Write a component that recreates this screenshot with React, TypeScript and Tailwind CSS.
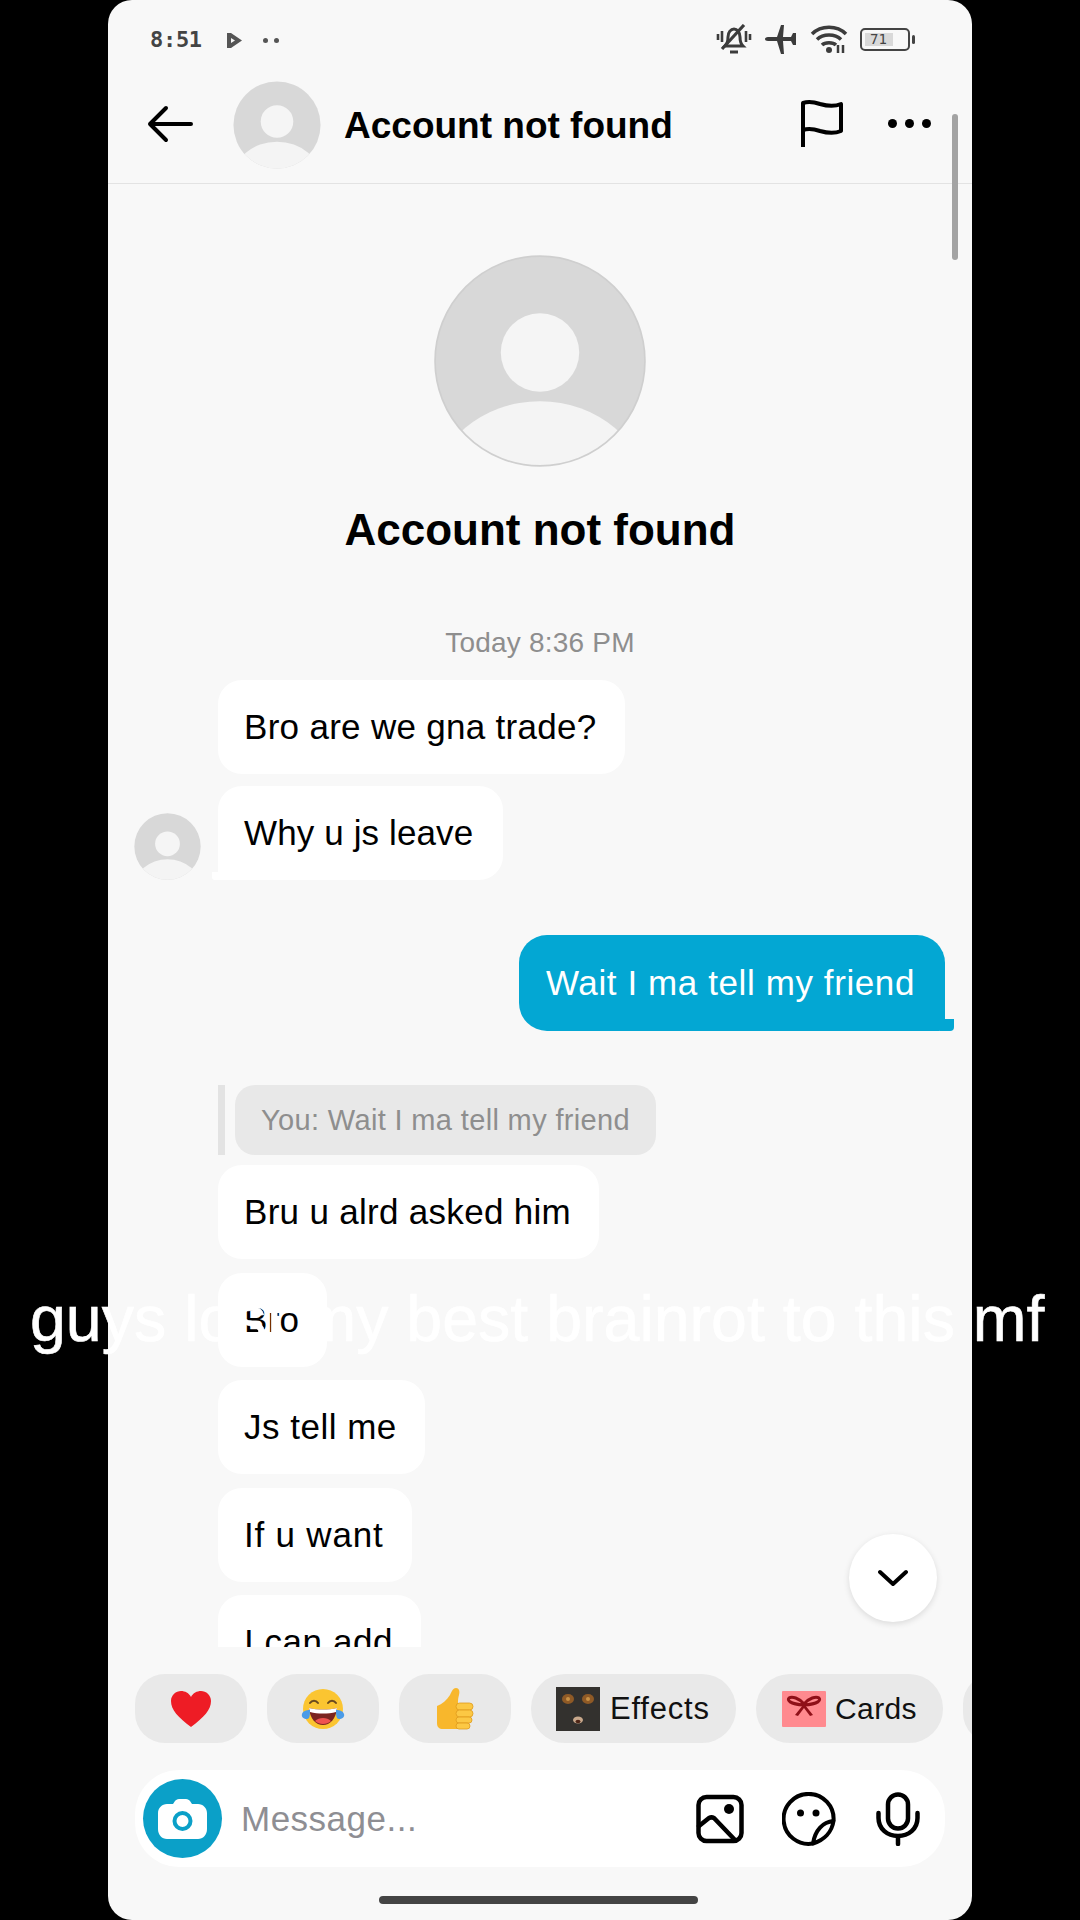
const sans = "font-['Liberation_Sans',Arial,sans-serif]";

const Avatar = ({ size, ring = false }: { size: number; ring?: boolean }) => (
  <svg width={size} height={size} viewBox="0 0 100 100" className="shrink-0">
    <defs>
      <clipPath id={`clip-${size}`}>
        <circle cx="50" cy="50" r="49.5" />
      </clipPath>
    </defs>
    <circle cx="50" cy="50" r="49.5" fill="#d8d8d8" />
    <g clipPath={`url(#clip-${size})`}>
      <circle cx="50" cy="46" r="18.5" fill="#f5f5f5" />
      <ellipse cx="50" cy="112" rx="50" ry="43" fill="#f4f4f4" />
    </g>
    {ring && <circle cx="50" cy="50" r="49.5" fill="none" stroke="#cfcfcf" strokeWidth="0.8" />}
  </svg>
);

const StatusBar = () => (
  <div className="flex h-[76px] items-start justify-between pl-[42px] pr-[57px] pt-[25px]">
    <div className="flex items-center">
      <span className="font-['DejaVu_Sans_Mono',monospace] text-[22px] font-bold leading-[30px] tracking-[-0.3px] text-[#444]">
        8:51
      </span>
      <svg width="15" height="15" viewBox="0 0 15 15" className="ml-[25px]">
        <path d="M0 0h4l11 7.500L4 15H0z M4 5v5l4-2.500z" fill="#555" fillRule="evenodd" />
      </svg>
      <span className="ml-[21px] flex gap-[6px]">
        <span className="size-[5px] rounded-full bg-[#555]" />
        <span className="size-[5px] rounded-full bg-[#555]" />
      </span>
    </div>
    <div className="-mt-[1px] flex items-center text-[#3c3c3c]">
      <svg width="36" height="30" viewBox="0 0 36 30" fill="none" stroke="currentColor" strokeWidth="3">
        <path d="M9 22c2-2 3-5 3-9 0-5 3-8 6-8s6 3 6 8c0 4 1 7 3 9z" />
        <path d="M6 25L28 1" strokeWidth="3.200" />
        <path d="M14 28h8" />
        <path d="M2 10v6M6 7v11M30 7v11M34 10v6" strokeWidth="2.600" />
      </svg>
      <svg width="33" height="30" viewBox="0 0 33 30" className="ml-[12px]" fill="currentColor">
        <path d="M1 15c0-1 1-2 3-2h9L17 1h3l-1 12h8l2-4h3v12h-3l-2-4h-8l1 13h-3l-4-13H4c-2 0-3-1-3-2z" />
      </svg>
      <svg width="38" height="30" viewBox="0 0 38 30" className="ml-[13px]" fill="none" stroke="currentColor" strokeWidth="3.500">
        <path d="M2 10c9-9 25-9 34 0M7 15.500c6-6 18-6 24 0M12 21c3-3 11-3 14 0" />
        <circle cx="19" cy="26" r="3" fill="currentColor" stroke="none" />
        <path d="M28 21v8M33 21v8" strokeWidth="2.500" />
      </svg>
      <div className="ml-[12px] flex h-[23px] w-[50px] items-center rounded-[5px] border-2 border-[#444] p-[3px]">
        <div className="flex h-full w-[28px] items-center bg-[#d9d9d9] pl-[3px] font-['DejaVu_Sans_Mono',monospace] text-[14px] leading-none text-[#444]">
          <span className="pl-[2px]">71</span>
        </div>
      </div>
      <span className="ml-[2px] h-[9px] w-[3px] rounded-sm bg-[#444]" />
    </div>
  </div>
);

const Header = () => (
  <div className="flex h-[108px] items-center border-b border-[#e3e3e3] pb-[8px] pl-[39px] pr-[41px]">
    <svg width="46" height="38" viewBox="0 0 46 38" fill="none" stroke="#000" strokeWidth="4" strokeLinecap="round" strokeLinejoin="round" className="-mt-[4px]">
      <path d="M44 19H3M19 3L3 19l16 16" />
    </svg>
    <div className="ml-[40px] -mt-[2px] h-[88px] w-[88px]">
      <Avatar size={88} />
    </div>
    <span className={`${sans} ml-[23px] text-[37px] font-bold leading-[44px] text-black`}>Account not found</span>
    <svg width="44" height="48" viewBox="0 0 44 48" fill="none" stroke="#000" strokeWidth="4" className="ml-auto -mt-[4px] translate-x-[2px]" strokeLinejoin="round">
      <path d="M3 47V3c6-2 11-1 17 1 7 2 14 3 21 0v27c-7 3-14 2-21 0-6-2-11-3-17-1" />
    </svg>
    <div className="ml-[46px] -mt-[5px] flex gap-[8px]">
      <span className="size-[9px] rounded-full bg-black" />
      <span className="size-[9px] rounded-full bg-black" />
      <span className="size-[9px] rounded-full bg-black" />
    </div>
  </div>
);

const Bubble = ({ text, className = "tracking-[0.3px] pr-[28px]" }: { text: string; className?: string }) => (
  <div
    className={`${sans} relative flex h-[94px] w-fit items-center rounded-[24px] bg-white pl-[26px] text-[35px] leading-[40px] text-black ${className}`}
  >
    {text}
  </div>
);

const Messages = () => (
  <div className="h-[1463px] overflow-hidden">
    <div className="mt-[71px] flex justify-center">
      <Avatar size={212} ring />
    </div>
    <div className={`${sans} mt-[38px] text-center text-[44px] font-bold leading-[50px] text-black`}>Account not found</div>
    <div className={`${sans} mt-[73px] text-center text-[28px] leading-[30px] tracking-[0.2px] text-[#8e8e8e]`}>Today 8:36 PM</div>

    <div className="mt-[22px] pl-[110px]">
      <Bubble text="Bro are we gna trade?" />
    </div>
    <div className="mt-[12px] flex items-end pl-[26px] pr-[18px]">
      <Avatar size={67} />
      <div className="relative ml-[17px]">
        <Bubble text="Why u js leave" className="rounded-bl-[4px] pr-[30px] tracking-[0.12px]" />
        <span className="absolute -left-[6px] bottom-0 h-[8px] w-[10px] rounded-bl-[3px] bg-white" />
      </div>
    </div>

    <div className="mt-[55px] flex justify-end pr-[27px]">
      <div className="relative">
        <div
          className={`${sans} flex h-[96px] items-center rounded-[28px] rounded-br-[6px] bg-[#03a7d3] pl-[27px] pr-[30px] text-[35px] leading-[40px] tracking-[0.6px] text-white`}
        >
          Wait I ma tell my friend
        </div>
        <span className="absolute -right-[9px] bottom-0 h-[12px] w-[14px] rounded-br-[4px] bg-[#03a7d3]" />
      </div>
    </div>

    <div className="mt-[54px] flex pl-[110px]">
      <span className="h-[70px] w-[7px] bg-[#e3e3e3]" />
      <div
        className={`${sans} ml-[10px] flex h-[70px] items-center rounded-[20px] bg-[#e8e8e8] pl-[26px] pr-[26px] text-[29px] leading-[34px] tracking-[0.35px] text-[#8e8e8e]`}
      >
        You: Wait I ma tell my friend
      </div>
    </div>

    <div className="mt-[10px] flex flex-col gap-[13.500px] pl-[110px]">
      <Bubble text="Bru u alrd asked him" />
      <Bubble text="Bro" />
      <Bubble text="Js tell me" className="pr-[28px] tracking-[0.5px]" />
      <Bubble text="If u want" className="pr-[28px] tracking-[0.8px]" />
      <Bubble text="I can add" className="pr-[28px] tracking-[0.55px]" />
    </div>
  </div>
);

const Heart = () => (
  <svg width="42" height="38" viewBox="0 0 42 38">
    <path d="M21 37C8 27 1 20 1 11 1 5 6 1 11 1c4 0 8 2 10 6 2-4 6-6 10-6 5 0 10 4 10 10 0 9-7 16-20 26z" fill="#ee1c25" />
  </svg>
);

const Laugh = () => (
  <svg width="44" height="44" viewBox="0 0 44 44">
    <circle cx="22" cy="22" r="20" fill="#fbc531" />
    <path d="M9 16c2-3 6-3 8 0M27 16c2-3 6-3 8 0" fill="none" stroke="#6b4a1e" strokeWidth="2" strokeLinecap="round" />
    <path d="M8 21c9 2 19 2 28 0-1 11-7 17-14 17S9 32 8 21z" fill="#7b2420" />
    <path d="M8 21c9 2 19 2 28 0l-1 4c-8 2-18 2-26 0z" fill="#fff" />
    <path d="M14 34c4-4 12-4 16 0-4 4-12 4-16 0z" fill="#ef5350" />
    <path d="M1 27c1-3 4-4 8-4 0 4 0 9-3 9s-6-2-5-5zM43 27c-1-3-4-4-8-4 0 4 0 9 3 9s6-2 5-5z" fill="#4a9be8" />
  </svg>
);

const Thumb = () => (
  <svg width="40" height="44" viewBox="0 0 40 44">
    <path d="M2 19c5-2 10-6 13-11 2-4 3-7 6-7s4 3 3 7c-1 3-1 7-1 8v26H8c-4 0-6-2-6-6z" fill="#f8b72c" />
    <rect x="21" y="16" width="17" height="7" rx="3.500" fill="#fcc844" stroke="#e09a1c" strokeWidth="0.8" />
    <rect x="21" y="23" width="17" height="7" rx="3.500" fill="#fcc844" stroke="#e09a1c" strokeWidth="0.8" />
    <rect x="21" y="30" width="16" height="6" rx="3" fill="#fcc844" stroke="#e09a1c" strokeWidth="0.8" />
    <rect x="21" y="36" width="14" height="6" rx="3" fill="#fcc844" stroke="#e09a1c" strokeWidth="0.8" />
  </svg>
);

const EmojiChip = ({ children }: { children: React.ReactNode }) => (
  <div className="flex h-[69px] w-[112px] shrink-0 items-center justify-center rounded-[30px] bg-[#e9e9e9]">
    {children}
  </div>
);

const QuickActions = () => (
  <div className="mt-[27px] flex h-[69px] gap-[20px] overflow-hidden pl-[27px]">
    <EmojiChip><Heart /></EmojiChip>
    <EmojiChip><Laugh /></EmojiChip>
    <EmojiChip><Thumb /></EmojiChip>
    <div className="flex h-[69px] w-[205px] shrink-0 items-center rounded-[34px] bg-[#e9e9e9] pl-[25px]">
      <svg width="44" height="44" viewBox="0 0 44 44">
        <rect width="44" height="44" fill="#33312e" />
        <ellipse cx="12" cy="12" rx="6" ry="5" fill="#8f5a26" />
        <ellipse cx="32" cy="12" rx="6" ry="5" fill="#8f5a26" />
        <circle cx="12" cy="12" r="2" fill="#c99246" />
        <circle cx="32" cy="12" r="2" fill="#c99246" />
        <ellipse cx="22" cy="33" rx="5" ry="3.500" fill="#c8a88c" />
        <ellipse cx="22" cy="34.500" rx="2.500" ry="1.800" fill="#4c2416" />
      </svg>
      <span className={`${sans} ml-[10px] text-[31px] leading-[36px] tracking-[0.8px] text-[#111]`}>Effects</span>
    </div>
    <div className="flex h-[69px] w-[187px] shrink-0 items-center rounded-[34px] bg-[#e9e9e9] pl-[26px]">
      <svg width="44" height="36" viewBox="0 0 44 36">
        <rect width="44" height="36" rx="1" fill="#ff8a8f" />
        <path d="M22 13C17 7 10 5 7 7c-2 2 0 6 15 7 15-1 17-5 15-7-3-2-10 0-15 6z" fill="none" stroke="#8f1018" strokeWidth="3" />
        <path d="M21 14l-8 10 3 1 6-8 6 8 3-1-8-10z" fill="#8f1018" />
      </svg>
      <span className={`${sans} ml-[9px] text-[30px] leading-[36px] tracking-[0.4px] text-[#111]`}>Cards</span>
    </div>
    <div className="h-[69px] w-[60px] shrink-0 rounded-l-[30px] bg-[#e9e9e9]" />
  </div>
);

const MessageBar = () => (
  <div className="mx-[27px] mt-[27px] flex h-[97px] items-center rounded-[44px] bg-white pl-[8px] pr-[25px]">
    <div className="flex size-[79px] items-center justify-center rounded-full bg-[#0ba0c8]">
      <svg width="49" height="40" viewBox="0 0 49 40">
        <path d="M9 5h6l2-3c1-1 2-2 4-2h7c2 0 3 1 4 2l2 3h6c5 0 9 4 9 9v16c0 6-4 10-9 10H9c-5 0-9-4-9-10V14c0-5 4-9 9-9z" fill="#fff" />
        <circle cx="24.500" cy="22" r="8" fill="none" stroke="#0ba0c8" strokeWidth="4" />
      </svg>
    </div>
    <span className={`${sans} ml-[19px] text-[35px] leading-[44px] tracking-[0.5px] text-[#8e8e93]`}>Message...</span>
    <svg width="48" height="50" viewBox="0 0 48 50" fill="none" stroke="#000" strokeWidth="4.500" strokeLinecap="round" strokeLinejoin="round" className="ml-auto">
      <rect x="2.500" y="3" width="43" height="44" rx="8" />
      <circle cx="33" cy="15" r="5" fill="#000" stroke="none" />
      <path d="M3 32l10-8c2-1 3-1 5 0l21 22" />
    </svg>
    <svg width="54" height="54" viewBox="0 0 54 54" fill="none" stroke="#000" strokeWidth="4" strokeLinejoin="round" className="ml-[38px]">
      <path d="M51.500 29A25 25 0 1 0 31 51.500" />
      <path d="M51.500 29C41 30 33 38 31 51.500C42 48 50 40 51.500 29z" />
      <circle cx="18.500" cy="21" r="3.500" fill="#000" stroke="none" />
      <circle cx="34" cy="21" r="3.500" fill="#000" stroke="none" />
    </svg>
    <svg width="44" height="54" viewBox="0 0 44 54" fill="none" stroke="#000" strokeWidth="4.500" strokeLinecap="round" className="ml-[40px]">
      <rect x="12" y="2.500" width="20" height="34" rx="10" />
      <path d="M2.500 21v5c0 11 9 18 19.500 18s19.500-7 19.500-18v-5M22 44v8" />
    </svg>
  </div>
);

export default function App() {
  return (
    <div className="relative flex h-[1920px] w-[1080px] justify-center overflow-hidden bg-black">
      <div className="relative flex h-[1920px] w-[864px] flex-col rounded-[24px] bg-[#f8f8f8]">
        <StatusBar />
        <Header />
        <Messages />
        <QuickActions />
        <MessageBar />
        <div className="mx-auto mt-[29px] h-[8px] w-[319px] -translate-x-[2px] rounded-full bg-[#444]" />

        {/* scroll indicator and jump-to-latest button sit over the thread */}
        <div className="absolute right-[14px] top-[114px] h-[146px] w-[6px] rounded-full bg-[#a3a3a3]" />
        <div className="absolute right-[35px] top-[1534px] flex size-[88px] items-center justify-center rounded-full bg-white shadow-[0_2px_6px_rgba(0,0,0,0.12)]">
          <svg width="30" height="18" viewBox="0 0 30 18" fill="none" stroke="#000" strokeWidth="4" strokeLinecap="round" strokeLinejoin="round">
            <path d="M2 3l13 12L28 3" />
          </svg>
        </div>
      </div>

      {/* video caption over the whole frame */}
      <div className={`${sans} absolute left-[30px] top-[1281px] whitespace-nowrap text-[64.500px] leading-[76px] text-white [-webkit-text-stroke:0.6px_white]`}>
        guys lost my best brainrot to this mf
      </div>
    </div>
  );
}
